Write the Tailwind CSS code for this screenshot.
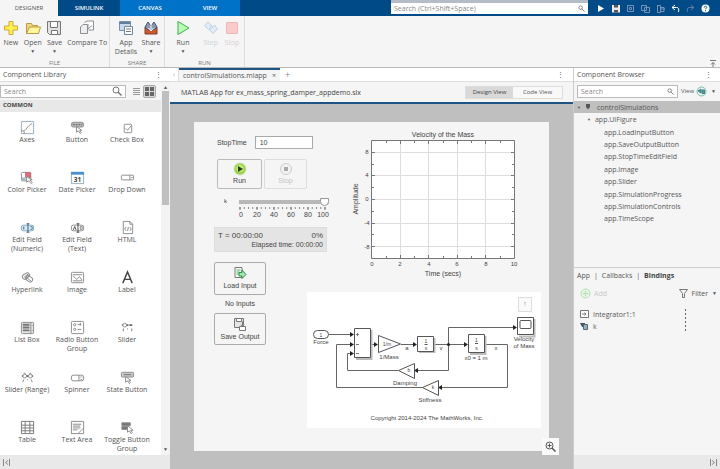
<!DOCTYPE html>
<html lang="en">
<head>
  <meta charset="UTF-8">
  <meta name="viewport" content="width=device-width, initial-scale=1.0">
  <title>App Designer - controlSimulations.mlapp</title>
  <script src="https://cdn.jsdelivr.net/npm/@tailwindcss/browser@4"></script>
</head>
<body class="flex h-screen flex-col overflow-hidden bg-[#f5f5f5] font-['Open_Sans','Noto_Sans',sans-serif] text-[7px] leading-[9px] text-[#555]">

  <!-- Tab bar -->
  <header class="flex h-4 shrink-0 bg-[#004a87] text-[6px] text-white">
    <nav class="flex">
      <a href="#" class="flex w-[58px] items-center justify-center bg-[#f5f5f5] text-[#555]">DESIGNER</a>
      <a href="#" class="flex w-[62px] items-center justify-center font-semibold">SIMULINK</a>
      <a href="#" class="flex w-[60px] items-center justify-center bg-[#0072c8] font-semibold">CANVAS</a>
      <a href="#" class="flex w-[60px] items-center justify-center bg-[#0072c8] font-semibold">VIEW</a>
    </nav>
    <div class="ml-auto flex items-center border-t-3 border-[#b4bcc8] bg-[#004a87] pb-[2px]">
      <label class="flex h-[11px] w-[197px] items-center bg-white px-[3px]">
        <input type="search" aria-label="Search" placeholder="Search (Ctrl+Shift+Space)" class="w-full text-[7px] text-[#555] outline-none placeholder:text-[#888]">
        <svg class="size-[7px] shrink-0" viewBox="0 0 8 8" fill="none" stroke="#777"><circle cx="3" cy="3" r="2"/><path d="M4.5 4.5 7.5 7.5"/></svg>
      </label>
    </div>
    <div class="flex w-[132px] items-center gap-[4px] pl-[7px]">
      <button aria-label="Run"><svg class="size-[11px]" viewBox="0 0 11 11"><path d="M3 2v7l6-3.5z" fill="#fff"/></svg></button>
      <button aria-label="Save"><svg class="size-[11px]" viewBox="0 0 11 11"><path d="M2 2h8v7.500H2z" fill="#e8e8e8"/><path d="M4 2h4v2.500H4zM4 7h4v2.500H4z" fill="#555"/></svg></button>
      <button aria-label="Cut"><svg class="size-[11px]" viewBox="0 0 11 11" fill="none" stroke="#7893b5"><path d="M2.500 2.500h6v6h-6zM4.500 4.500h2v2h-2z"/></svg></button>
      <button aria-label="Copy"><svg class="size-[11px]" viewBox="0 0 11 11" fill="none" stroke="#7893b5"><path d="M1.500 2.500h5v5h-5zM4.500 4.500h5v5h-5z"/></svg></button>
      <button aria-label="Paste"><svg class="size-[11px]" viewBox="0 0 11 11" fill="none" stroke="#7893b5"><path d="M2.500 2v7.500h3V2.500h-3M5.500 4.500h3.500v4H5.500M6 6h4"/></svg></button>
      <button aria-label="Undo"><svg class="size-[11px]" viewBox="0 0 11 11" fill="none" stroke="#fff"><path d="M5 2 2 4.500 5 7M2 4.500h4.500C9 4.500 9 6 8.500 9"/></svg></button>
      <button aria-label="Redo"><svg class="size-[11px]" viewBox="0 0 11 11" fill="none" stroke="#5f80a8"><path d="M6 2 9 4.500 6 7M9 4.500H4.500C2 4.500 2 6 2.500 9"/></svg></button>
      <button aria-label="Help"><svg class="size-[11px]" viewBox="0 0 11 11"><circle cx="5.500" cy="5.500" r="4" fill="#fff"/><path d="M4.300 4.500c0-1.800 2.600-1.500 2.400 0C6.600 5.300 5.500 5.300 5.500 6.300M5.500 7.200v1" fill="none" stroke="#004a87"/></svg></button>
    </div>
  </header>

  <!-- Toolstrip -->
  <section class="flex h-[52px] shrink-0 border-b border-[#b8b8b8] bg-[#f5f5f5]">
    <div class="flex w-[110px] flex-col border-r border-[#ddd]">
      <div class="flex flex-1 items-start pt-[4px]">
        <button class="flex w-[22px] flex-col items-center gap-[2px]">
          <svg class="size-4" viewBox="0 0 16 16"><path d="M6 1.500h4V6h4.500v4H10v4.500H6V10H1.500V6H6z" fill="#fff04a" stroke="#c9a94a"/></svg>
          <span>New</span>
        </button>
        <button class="flex w-[22px] flex-col items-center gap-[2px]">
          <svg class="size-4" viewBox="0 0 16 16"><path d="M1.500 13.500V3.500h5l1 2h5v2.500" fill="#f0d67a" stroke="#bb9a45"/><path d="M1.500 13.500 4.500 7h11l-2 6.500z" fill="#fff7a0" stroke="#bb9a45"/></svg>
          <span>Open</span><span class="text-[5px] leading-[5px]">▼</span>
        </button>
        <button class="flex w-[22px] flex-col items-center gap-[2px]">
          <svg class="size-4" viewBox="0 0 16 16" fill="none" stroke="#777"><path d="M1.500 1.500h13v13h-11l-2-2z" fill="#e2e2e2"/><path d="M4.500 1.500h7v6h-7zM5.500 10.500h6v4h-6z" fill="#fff"/></svg>
          <span>Save</span><span class="text-[5px] leading-[5px]">▼</span>
        </button>
        <button class="flex w-[44px] flex-col items-center gap-[2px] whitespace-nowrap">
          <svg class="size-4" viewBox="0 0 16 16" fill="none" stroke="#8b9096"><path d="M5.500 2.500 8 1h6.500v9h-5" fill="#fff"/><path d="M1.500 7 4 4.500h4.500v9h-7z" fill="#eee"/><path d="M9 4v5l4-3.500"/></svg>
          <span>Compare To</span>
        </button>
      </div>
      <div class="pb-px text-center text-[6px] leading-[6px] text-[#777]">FILE</div>
    </div>
    <div class="flex w-[55px] flex-col border-r border-[#ddd]">
      <div class="flex flex-1 items-start pt-[4px] pl-px">
        <button class="flex w-[30px] flex-col items-center gap-[2px]">
          <svg class="size-4" viewBox="0 0 16 16"><path d="M1.500 1.500h11v9h-11z" fill="#c8daea" stroke="#7a92a8"/><path d="M1.500 3h11" stroke="#607f9e" stroke-width="2"/><path d="M6.500 6.500h8v8h-8z" fill="#fff" stroke="#71879a"/><path d="M8 9h5M8 11.500h5" stroke="#777"/></svg>
          <span>App<br>Details</span>
        </button>
        <button class="flex w-[20px] flex-col items-center gap-[2px]">
          <svg class="size-4" viewBox="0 0 16 16"><path d="M2 7h12v7H2z" fill="#d3592b" stroke="#783f2a"/><path d="M2 7 5 2l3 4 3-4 3 5-3 3H5z" fill="#8b98b2" stroke="#495671"/><path d="M8 3v8M5.500 8 8 11l2.500-3" stroke="#fff" fill="none"/></svg>
          <span>Share</span><span class="text-[5px] leading-[5px]">▼</span>
        </button>
      </div>
      <div class="pb-px text-center text-[6px] leading-[6px] text-[#777]">SHARE</div>
    </div>
    <div class="flex w-[80px] flex-col border-r border-[#ddd]">
      <div class="flex flex-1 items-start pt-[4px] pl-[4px]">
        <button class="flex w-7 flex-col items-center gap-[2px]">
          <svg class="size-4" viewBox="0 0 16 16"><path d="M3 1.500v13L14 8z" fill="#b9ffb5" stroke="#3fae49"/></svg>
          <span>Run</span><span class="text-[5px] leading-[5px]">▼</span>
        </button>
        <button disabled class="flex w-[27px] flex-col items-center gap-[2px] text-[#ccd3da]">
          <svg class="size-4" viewBox="0 0 16 16" fill="#e2ecf7" stroke="#bdd0e4"><path d="M1.500 5.500 5 2l4 4-3.500 3.500zM6.500 10l5-5 3 4-4.500 4.500z"/></svg>
          <span>Step</span>
        </button>
        <button disabled class="flex w-4 flex-col items-center gap-[2px] text-[#d6d0d0]">
          <svg class="size-4" viewBox="0 0 16 16"><path d="M2.500 2.500h11v11h-11z" fill="#fbcaca" stroke="#f2b5b5"/></svg>
          <span>Stop</span>
        </button>
      </div>
      <div class="pb-px text-center text-[6px] leading-[6px] text-[#777]">RUN</div>
    </div>
    <button aria-label="Collapse toolstrip" class="mt-auto mr-[3px] ml-auto"><svg class="size-2" viewBox="0 0 8 8" fill="none" stroke="#777"><path d="M1 1.500h6M4 8V3.500M2 5.500l2-2 2 2"/></svg></button>
  </section>

  <main class="flex min-h-0 flex-1">
    <!-- Component library -->
    <aside class="flex w-[170px] shrink-0 flex-col bg-white">
      <div class="flex h-[14px] shrink-0 items-center justify-between border-b border-[#ddd] pr-[8px] pl-[3px]">
        <h2>Component Library</h2><button aria-label="Library menu">⋮</button>
      </div>
      <div class="flex min-h-0 flex-1">
        <div class="min-w-0 flex-1 overflow-hidden">
          <div class="flex h-[18px] items-center bg-[#f5f5f5]">
            <label class="flex h-[13px] flex-1 items-center border border-[#bbb] bg-white px-[3px]">
              <input type="search" aria-label="Search components" placeholder="Search" class="w-full outline-none placeholder:text-[#888]">
              <svg class="size-[10px] shrink-0" viewBox="0 0 10 10" fill="none" stroke="#777"><circle cx="4" cy="4" r="3"/><path d="M6 6 9.500 9.500" stroke-width="1.500"/></svg>
            </label>
            <button aria-label="List view" class="ml-[5px] flex size-[10px] items-center justify-center"><svg class="size-[7px]" viewBox="0 0 7 7" stroke="#999"><path d="M0 .5h7M0 2.500h7M0 4.500h7M0 6.500h7"/></svg></button>
            <button aria-label="Grid view" class="mr-[5px] ml-[2px] flex size-[13px] items-center justify-center rounded-[2px] border border-[#aaa] bg-[#d8d8d8]"><svg class="size-[9px]" viewBox="0 0 9 9" fill="#666"><path d="M0 0h4v4H0zM5 0h4v4H5zM0 5h4v4H0zM5 5h4v4H5z"/></svg></button>
          </div>
          <h3 class="h-[12px] bg-[#e8e8e8] pl-[3px] text-[6px] leading-[11px] font-bold text-[#444]">COMMON</h3>
          <div id="library" class="grid grid-cols-3 pt-[8px] pr-[9px] pl-[2px]"></div>
        </div>
        <div class="flex w-[9px] shrink-0 flex-col items-center bg-[#f3f3f3] py-[3px] text-[5px] leading-[5px]">
          <span>▲</span>
          <div class="mt-px h-[114px] w-[7px] bg-[#bfbfbf]"></div>
          <span class="mt-auto">▼</span>
        </div>
      </div>
      <div class="flex h-[14px] shrink-0 items-center bg-[#e9e9e9] pl-[3px]">
        <button aria-label="Collapse library"><svg class="size-[7px]" viewBox="0 0 7 7" fill="none" stroke="#888"><path d="M.5 0v7M6.500 0v7M5 1.500 2.500 3.500 5 5.500"/></svg></button>
      </div>
    </aside>

    <!-- Document -->
    <section class="flex min-w-0 flex-1 flex-col bg-[#bfbfbf]">
      <div class="flex h-[14px] shrink-0 items-stretch border-b border-[#ddd] bg-white">
        <button aria-label="Scroll tabs" class="w-[9px] border-r border-[#ddd] text-[#aaa]">‹</button>
        <div class="flex items-center gap-[5px] border-t-2 border-[#1d5484] bg-[#f5f5f5] px-[4px]">
          <span>controlSimulations.mlapp</span><button aria-label="Close tab">×</button>
        </div>
        <button aria-label="New tab" class="px-[5px] text-[9px] text-[#888]">+</button>
        <button aria-label="Document menu" class="mr-[9px] ml-auto">⋮</button>
      </div>
      <div class="flex h-[22px] shrink-0 items-center justify-between border-b-2 border-[#1d5484] bg-[#f5f5f5] pr-[10px] pl-[11px]">
        <h1 class="text-[#444]">MATLAB App for ex_mass_spring_damper_appdemo.slx</h1>
        <div class="flex h-[13px] border border-[#ddd]">
          <button class="w-[47px] bg-[#d9d9d9] text-[6px] text-[#444]">Design View</button>
          <button class="w-[49px] bg-[#f8f8f8] text-[6px]">Code View</button>
        </div>
      </div>
      <div class="relative flex min-h-0 flex-1 px-[24px] py-[18px]">
        <!-- App figure -->
        <div class="relative flex-1 bg-[#f5f5f5] font-['Liberation_Sans',Arial,sans-serif] text-[8px] text-[#444]">
          <div class="w-[135px] pt-[13px] pl-[20px]">
            <div class="flex h-[14px] items-center gap-[8px] pl-[3px]">
              <label for="stopTime" class="text-[7px]">StopTime</label>
              <input id="stopTime" value="10" class="h-[13px] w-[58px] shrink-0 border border-[#aaa] bg-white pl-[4px] text-[7px]">
            </div>
            <div class="mt-[10px] flex gap-[2px] pl-[3px]">
              <button class="flex h-[30px] w-[45px] flex-col items-center rounded-[2px] border border-[#bbb] pt-[2px] text-[7px]">
                <svg class="size-[14px]" viewBox="0 0 14 14"><circle cx="7" cy="7" r="6" fill="#9bd34e" stroke="#cbe0b0"/><circle cx="7" cy="6.500" r="3.500" fill="#c8ef7c"/><path d="M5 4v6l5-3z" fill="#243f16"/></svg>Run
              </button>
              <button disabled class="flex h-[30px] w-[43px] flex-col items-center rounded-[2px] border border-[#ddd] pt-[2px] text-[7px] text-[#c4c4c4]">
                <svg class="size-[14px]" viewBox="0 0 14 14"><circle cx="7" cy="7" r="5.500" fill="#f2f2f2" stroke="#ccc"/><path d="M5 5h4v4H5z" fill="#aaa"/></svg>Stop
              </button>
            </div>
            <div class="mt-[8px] flex pl-[10px]">
              <label for="k" class="w-[16px] text-[6px]">k</label>
              <div class="w-[90px] shrink-0">
                <input id="k" type="range" min="0" max="100" value="100" class="block h-[9px] w-full appearance-none bg-transparent [&::-webkit-slider-runnable-track]:h-[4px] [&::-webkit-slider-runnable-track]:bg-[#b8b8b8] [&::-webkit-slider-thumb]:-mt-[2px] [&::-webkit-slider-thumb]:h-[8px] [&::-webkit-slider-thumb]:w-[9px] [&::-webkit-slider-thumb]:appearance-none [&::-webkit-slider-thumb]:rounded-b-full [&::-webkit-slider-thumb]:border [&::-webkit-slider-thumb]:border-[#999] [&::-webkit-slider-thumb]:bg-white">
                <svg class="block w-full" viewBox="0 0 90 13" font-size="7" text-anchor="middle" fill="#444">
                  <path d="M.5 2h86" stroke="#888" stroke-width="2" stroke-dasharray="1 3.250"/>
                  <path d="M1 1v3M18 1v3M35 1v3M52 1v3M69 1v3M86 1v3" stroke="#777"/>
                  <text x="2" y="11">0</text><text x="18" y="11">20</text><text x="35" y="11">40</text><text x="52" y="11">60</text><text x="69" y="11">80</text><text x="84" y="11">100</text>
                </svg>
              </div>
            </div>
            <div class="mt-[8px] h-[25px] w-[113px] border border-[#ddd] bg-[#e4e4e4] px-[3px] pt-[3px]">
              <div class="flex justify-between"><span>T = 00:00:00</span><span>0%</span></div>
              <div class="text-right text-[7px] whitespace-nowrap">Elapsed time: 00:00:00</div>
            </div>
            <button class="mt-[10px] flex h-[33px] w-[52px] flex-col items-center gap-px rounded-[2px] border border-[#aaa] pt-[3px] text-[7px]">
              <svg class="size-[14px]" viewBox="0 0 14 14"><path d="M2 1.500h7v10H2z" fill="#fff" stroke="#777"/><path d="M3.500 4h4M3.500 6h3M3.500 8h3" stroke="#43b062"/><path d="M6 6.500h3V4l4 4.500-4 4v-2.500H6z" fill="#a7e6b3" stroke="#299348"/></svg>Load Input
            </button>
            <p class="w-[52px] py-[4px] text-center text-[7px] leading-[10px]">No Inputs</p>
            <button class="flex h-[32px] w-[52px] flex-col items-center gap-px rounded-[2px] border border-[#aaa] pt-[3px] text-[7px]">
              <svg class="size-[14px]" viewBox="0 0 14 14" fill="none" stroke="#777"><path d="M1.500 1.500h9v9h-9z" fill="#e5e5e5"/><path d="M3.500 1.500h5v3h-5z" fill="#fff"/><path d="M6.500 9.500h6v4h-6zM9.500 4.500V9M8 7.500l1.500 2L11 7.500" fill="#fff"/></svg>Save Output
            </button>
          </div>

          <!-- Time scope -->
          <svg class="absolute top-0 left-[146px] h-[160px] w-[190px]" viewBox="0 0 190 160" fill="#444" font-size="7" text-anchor="middle">
            <path d="M31.500 18.500h143v118h-143z" fill="#fff"/>
            <path d="M60.500 18v118M88.500 18v118M117.500 18v118M145.500 18v118M32 30.500h142M32 53.500h142M32 77.500h142M32 101.500h142M32 124.500h142" stroke="#ddd"/>
            <path d="M31.500 18.500h143v118h-143z" fill="none" stroke="#777"/>
            <path d="M46.500 136v-2M60.500 136v-3M74.500 136v-2M88.500 136v-3M103.500 136v-2M117.500 136v-3M131.500 136v-2M145.500 136v-3M160.500 136v-2M46.500 19v2M60.500 19v3M74.500 19v2M88.500 19v3M103.500 19v2M117.500 19v3M131.500 19v2M145.500 19v3M160.500 19v2M32 30.500h3M32 42.500h2M32 53.500h3M32 65.500h2M32 77.500h3M32 89.500h2M32 101.500h3M32 112.500h2M32 124.500h3M174 30.500h-3M174 42.500h-2M174 53.500h-3M174 65.500h-2M174 77.500h-3M174 89.500h-2M174 101.500h-3M174 112.500h-2M174 124.500h-3" stroke="#777"/>
            <text x="103" y="15">Velocity of the Mass</text>
            <text x="103" y="154">Time (secs)</text>
            <text transform="translate(18 77) rotate(-90)">Amplitude</text>
            <g font-size="6">
              <text x="32" y="144">0</text><text x="60" y="144">2</text><text x="89" y="144">4</text><text x="117" y="144">6</text><text x="146" y="144">8</text><text x="174" y="144">10</text>
              <text x="27" y="32">8</text><text x="27" y="55">4</text><text x="27" y="79">0</text><text x="27" y="103">-4</text><text x="27" y="127">-8</text>
            </g>
          </svg>

          <!-- Model -->
          <svg class="absolute top-[170px] left-[113px] h-[136px] w-[234px] bg-white" viewBox="0 0 234 136" fill="#444" font-size="6" text-anchor="middle">
            <g fill="none" stroke="#666">
              <path d="M22 42.500h22M63 52.500h5M94 52.500h13M126 52.500h32M177 52.500h23.500v43H134M116 95.500H29.500v-43H44M141.500 52.500v26H110M91 78.500H40.500v-17H44M141.500 52.500v-17H206"/>
            </g>
            <path d="M43 40v5l4-2.500zM43 50v5l4-2.500zM43 59v5l4-2.500zM67 50v5l4-2.500zM106 50v5l4-2.500zM157 50v5l4-2.500zM206 33v5l4-2.500zM111 76v5l-4-2.500zM135 93v5l-4-2.500z" fill="#222"/>
            <circle cx="141.500" cy="52.500" r="1.500" fill="#222"/>
            <path d="M49 67h15.500V38M112 60h15.500V46M163 62h15.500V44M212 44.500h15.500V27" fill="none" stroke="#bbb" stroke-width="2"/>
            <g fill="#fff" stroke="#555">
              <rect x="6.500" y="38.500" width="15" height="8" rx="4"/>
              <path d="M47.500 36.500h16v29h-16zM110.500 44.500h16v15h-16zM161.500 42.500h16v18h-16zM210.500 25.500h16v17h-16zM71.500 43.500v17l22-8.500zM107.500 71.500v15l-16-8zM131.500 88.500v15l-16-8z"/>
              <rect x="213" y="28.500" width="11" height="8" rx="1"/>
              <path d="M211.500 5.500h13v14h-13z" stroke="#ddd" fill="#fafafa"/>
            </g>
            <path d="M117.500 52.500h3M168 51.500h3" stroke="#555"/>
            <path d="M49 42.500h3M50.500 41v3M49 52.500h3M49 61.500h3" stroke="#777"/>
            <text x="14" y="45" font-size="5">1</text>
            <text x="80" y="54" font-size="5">1/m</text>
            <text x="119" y="51" font-size="5">1</text><text x="119" y="58" font-size="5">s</text>
            <text x="169.500" y="50" font-size="5">1</text><text x="169.500" y="58" font-size="5">s</text>
            <text x="102" y="80" font-size="5">b</text><text x="126" y="97" font-size="5">k</text>
            <text x="100" y="58">a</text><text x="134" y="58">v</text><text x="189" y="58">x</text>
            <text x="14" y="52">Force</text><text x="82" y="67">1/Mass</text><text x="98" y="93">Damping</text><text x="123" y="110">Stiffness</text>
            <text x="169" y="68">x0 = 1 m</text><text x="217" y="49">Velocity</text><text x="217" y="56">of Mass</text>
            <text x="218" y="14" font-size="7" fill="#777">↑</text>
            <text x="120" y="128">Copyright 2014-2024 The MathWorks, Inc.</text>
          </svg>
        </div>
        <button aria-label="Zoom" class="absolute right-[14px] bottom-[14px] flex size-[17px] items-center justify-center bg-[#fafafa]">
          <svg class="size-[11px]" viewBox="0 0 11 11" fill="none" stroke="#555"><circle cx="4.500" cy="4.500" r="3.500"/><path d="M7 7l3.500 3.500" stroke-width="1.500"/><path d="M2.500 4.500h4M4.500 2.500v4"/></svg>
        </button>
      </div>
    </section>

    <!-- Component browser -->
    <aside class="flex w-[147px] shrink-0 flex-col border-l border-[#ccc] bg-[#f5f5f5]">
      <div class="flex h-[14px] shrink-0 items-center justify-between border-b border-[#ddd] bg-white pr-[8px] pl-[3px]">
        <h2>Component Browser</h2><button aria-label="Browser menu">⋮</button>
      </div>
      <div class="flex h-[18px] shrink-0 items-center pr-[3px] pl-[3px]">
        <label class="flex h-[13px] min-w-0 flex-1 items-center border border-[#bbb] bg-white px-[3px]">
          <input type="search" aria-label="Search browser" placeholder="Search" class="w-full min-w-0 outline-none placeholder:text-[#888]">
          <svg class="size-[7px] shrink-0" viewBox="0 0 8 8" fill="none" stroke="#777"><circle cx="3" cy="3" r="2"/><path d="M4.500 4.500 7.500 7.500"/></svg>
        </label>
        <button class="flex h-[13px] items-center gap-[2px] pl-[3px] text-[6px]">View
          <svg class="size-[11px]" viewBox="0 0 11 11"><circle cx="5.500" cy="5.500" r="4.500" fill="#e4f5ee" stroke="#7dbda5"/><path d="M2 5 5 3v4zM6 4h2.500v3.500H6z" fill="#4a9" stroke="#487a8a"/></svg>
          <span class="pr-px pl-[2px] text-[5px]">▼</span>
        </button>
      </div>
      <ul class="mt-px flex h-[124px] shrink-0 flex-col text-[7px] *:flex *:flex-1 *:items-center">
        <li class="gap-[4px] bg-[#bfbfbf] pl-[3px]"><span class="text-[4px]">▼</span><svg class="size-[6px]" viewBox="0 0 6 6"><path d="M1 0h4v3L3 5.500 1 3z" fill="#555"/></svg><span class="pl-[2px]">controlSimulations</span></li>
        <li class="gap-[4px] pl-[13px]"><span class="text-[4px]">▼</span>app.UIFigure</li>
        <li class="pl-[30px]">app.LoadInputButton</li>
        <li class="pl-[30px]">app.SaveOutputButton</li>
        <li class="pl-[30px]">app.StopTimeEditField</li>
        <li class="pl-[30px]">app.Image</li>
        <li class="pl-[30px]">app.Slider</li>
        <li class="pl-[30px]">app.SimulationProgress</li>
        <li class="pl-[30px]">app.SimulationControls</li>
        <li class="pl-[30px]">app.TimeScope</li>
      </ul>
      <div class="mt-[42px] border-t border-[#ccc] pt-[3px] pl-[3px]">
        <nav class="flex gap-[4px]"><a href="#">App</a><span>|</span><a href="#">Callbacks</a><span>|</span><a href="#" class="font-bold text-[#444]">Bindings</a></nav>
        <div class="mt-[8px] flex items-center justify-between pr-[3px] pl-[3px]">
          <button disabled class="flex items-center gap-[3px] text-[#c8c8c8]"><svg class="size-[11px]" viewBox="0 0 11 11" fill="#e4f6e2" stroke="#b9ddb5"><circle cx="5.500" cy="5.500" r="4.500"/><path d="M5.500 3v5M3 5.500h5"/></svg>Add</button>
          <button class="flex items-center gap-[4px]"><svg class="size-[9px]" viewBox="0 0 9 9" fill="none" stroke="#777"><path d="M.5.500h8L5.500 4.500v4h-2v-4z"/></svg>Filter<span class="text-[5px]">▼</span></button>
        </div>
        <div class="mt-[9px] flex h-[12px] items-center gap-[4px] pl-[3px]">
          <svg class="h-[8px] w-[9px]" viewBox="0 0 9 8" fill="#fff" stroke="#777"><path d="M.5.500h8v7h-8z"/><path d="M2 4h4M4.500 2.500 6 4 4.500 5.500"/></svg>Integrator1:1
          <button aria-label="Binding menu" class="mr-[33px] ml-auto"><svg class="h-[10px] w-[3px]" viewBox="0 0 3 10" fill="#666"><path d="M1 0h1v2H1zM1 4h1v2H1zM1 8h1v2H1z"/></svg></button>
        </div>
        <div class="flex h-[12px] items-center gap-[4px] pl-[3px]">
          <svg class="h-[8px] w-[9px]" viewBox="0 0 9 8"><path d="M0 1h5v4H2z" fill="#456"/><path d="M3.500 2.500h4v5h-4z" fill="#8fb4c4" stroke="#567"/></svg>k
          <button aria-label="Binding menu" class="mr-[33px] ml-auto"><svg class="h-[10px] w-[3px]" viewBox="0 0 3 10" fill="#666"><path d="M1 0h1v2H1zM1 4h1v2H1zM1 8h1v2H1z"/></svg></button>
        </div>
      </div>
      <div class="mt-auto flex h-[14px] shrink-0 items-center justify-end bg-[#e9e9e9] pr-[3px]">
        <button aria-label="Collapse browser"><svg class="size-[7px]" viewBox="0 0 7 7" fill="none" stroke="#888"><path d="M.5 0v7M6.500 0v7M2 1.500l2.500 2-2.500 2"/></svg></button>
      </div>
    </aside>
  </main>

  <script>
  // Component name and the drawing inside its 16x16 icon
  const components = [
    ["Axes", '<path d="M1.500 1.500h13v13h-13z" stroke="#9ab"/><path d="M3 12c4 0 5-7 10-8M1.500 11.500h2M4.500 14.500v-2"/>'],
    ["Button", '<rect x="1.500" y="2.500" width="13" height="5" rx="2" fill="#bbb"/><path d="M3 5h10" stroke="#555" stroke-dasharray="2 1"/><path d="M7 7v6l2-1.500 2 3 1-1-1.500-2.500h2z" fill="#fff"/>'],
    ["Check Box", '<rect x="4.500" y="4.500" width="8" height="9" rx="1"/><path d="M6 9l2 2 4-5"/>'],
    ["Color Picker", '<rect x="1.500" y="2.500" width="10" height="9" rx="1"/><path d="M6 3h5v5H6z" fill="#e36a80" stroke="#c66"/><path d="M2 8h4v3H2z" fill="#9bc" stroke="none"/><path d="M7 7v6l2-1.500 3 3 1-1-2.500-3H13z" fill="#fff"/>'],
    ["Date Picker", '<path d="M1.500 2.500h13v12h-13z" fill="#fff" stroke="#9ab"/><path d="M1 3.500h14" stroke="#4a92cf" stroke-width="3"/><text x="8" y="12.500" font-size="7" font-weight="bold" text-anchor="middle" fill="#444" stroke="none">31</text>'],
    ["Drop Down", '<rect x="1.500" y="5.500" width="13" height="5" rx="1"/><path d="M10.500 5.500v5M11.500 7.500l1 1 1-1"/>'],
    ["Edit Field (Numeric)", '<rect x="1.500" y="5.500" width="13" height="6" rx="2" fill="#d9eaf7" stroke="#8ab"/><path d="M4 7v3M8.500 4v9M7 4h3M7 13h3" stroke="#357"/><path d="M11 7h2v3h-2" stroke="#48a"/>'],
    ["Edit Field (Text)", '<rect x="1.500" y="5.500" width="13" height="6" rx="2"/><path d="M3.500 10.500 5 7l1.500 3.500M8.500 4v9M7 4h3M7 13h3" stroke="#444"/><path d="M11 7h2v3h-2z"/>'],
    ["HTML", '<path d="M3.500 1.500h7l3 3v10h-10z"/><path d="M10.500 1.500v3h3M6.500 7.500 5 9.500l1.500 2M10.500 7.500l1.500 2-1.500 2M9 7.500l-1 4"/>'],
    ["Hyperlink", '<rect x="2" y="4" width="8" height="5" rx="2.500" transform="rotate(-35 6 6)"/><rect x="6" y="7" width="8" height="5" rx="2.500" transform="rotate(35 10 9)"/><path d="M4 8l5-4M7 8l5 4M5 10l6-5"/>'],
    ["Image", '<rect x="1.500" y="2.500" width="13" height="11" rx="1"/><path d="M3 5h10M3 6l4 4 3-3 3 4M3 11.500h10"/>'],
    ["Label", '<path d="M3 14 8 2l5 12M5 10h6" stroke="#444" stroke-width="1.500"/>'],
    ["List Box", '<rect x="1.500" y="2.500" width="13" height="12" rx="1" fill="#e5e5e5"/><path d="M3 5h7M3 8h7M3 11h7" stroke="#777" stroke-width="2"/><path d="M11.500 3v11M12.500 6h1M12.500 11h1"/>'],
    ["Radio Button Group", '<rect x="1.500" y="1.500" width="13" height="13" rx="1"/><circle cx="5" cy="5" r="1.200"/><circle cx="5" cy="10" r="1.200"/><path d="M8 5h4M8 10h4M11 3v3"/>'],
    ["Slider", '<path d="M2 5.500h12" stroke="#666" stroke-width="2" stroke-dasharray="3 1"/><path d="M3.500 9v3M8 9v1M12.500 9v3" stroke="#777"/><circle cx="5" cy="5.500" r="2" fill="#fff"/>'],
    ["Slider (Range)", '<path d="M2 6.500h12" stroke="#666" stroke-width="2"/><circle cx="5" cy="6.500" r="2" fill="#fff"/><circle cx="11" cy="6.500" r="2" fill="#fff"/><path d="M3 13l1-3M8 10v1M13 13l-1-3M4 3.500h2M10 3.500h2"/>'],
    ["Spinner", '<rect x="1.500" y="5.500" width="13" height="6" rx="2"/><path d="M9.500 5.500v6M11 8l1-1 1 1M11 9.500l1 1 1-1"/>'],
    ["State Button", '<rect x="1.500" y="2.500" width="13" height="5" rx="1" fill="#ccc"/><path d="M4 5h8" stroke="#666"/><path d="M6 7v6l2-1.500 2 3 1-1-1.500-2.500h2z" fill="#fff"/>'],
    ["Table", '<path d="M1.500 1.500h13v13h-13zM1.500 5.500h13M1.500 8.500h13M1.500 11.500h13M5.500 1.500v13M10.500 1.500v13" stroke="#777"/>'],
    ["Text Area", '<path d="M1.500 1.500h13v13h-13z"/><path d="M3 4.500h9M3 6.500h8M3 8.500h8M3 10.500h5" stroke="#888"/><path d="M9 14l5-5"/>'],
    ["Toggle Button<br>Group", '<path d="M2 3h9v3H2zM2 7h7v3H2z" fill="#777"/><path d="M8 6v7l2-1.500 2 3 1-1-1.500-2.500H14z" fill="#fff"/>']
  ];

  const library = document.getElementById('library');
  components.forEach(([name, icon]) => {
    const button = document.createElement('button');
    button.className = 'flex h-[50px] flex-col items-center';
    button.innerHTML = `
      <svg class="size-[15px] shrink-0" viewBox="0 0 16 16" fill="none" stroke="#8a8a8a">${icon}</svg>
      <span class="max-w-[48px] text-center">${name}</span>
    `;
    library.appendChild(button);
  });
  </script>
</body>
</html>
